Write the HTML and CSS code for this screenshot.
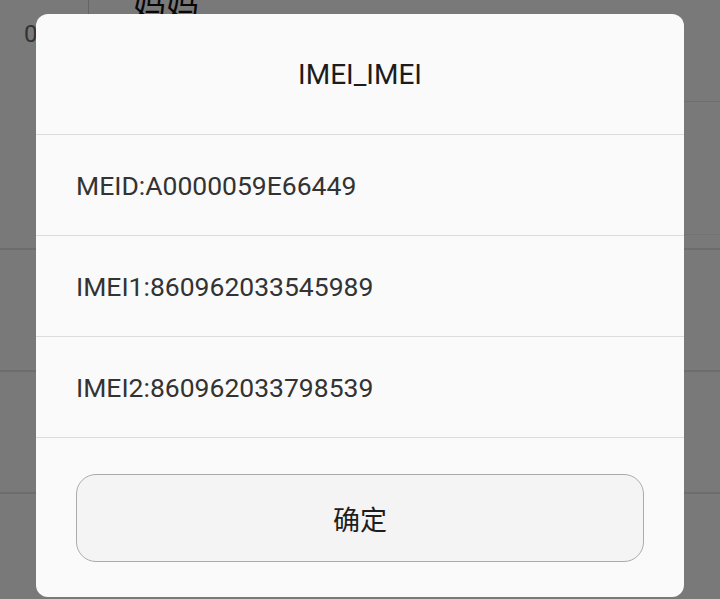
FILE: index.html
```html
<!DOCTYPE html>
<html lang="zh-CN">
<head>
    <meta charset="utf-8">
    <title>IMEI</title>
    <link rel="stylesheet" href="styles.css">
</head>
<body>
<div id="screen">
    <div class="bg-list">
        <div class="bg-row bg-head">
            <span class="bg-time">09</span>
            <span class="bg-name">妈妈</span>
        </div>
        <div class="bg-row bg-second"></div>
        <div class="bg-row bg-gap"></div>
        <div class="bg-row bg-full"></div>
        <div class="bg-row bg-full"></div>
        <div class="bg-row bg-last"></div>
    </div>

    <div id="mask"></div>

    <div id="dialog">
        <div class="dlg-title">IMEI_IMEI</div>
        <div class="dlg-row">MEID:A0000059E66449</div>
        <div class="dlg-row">IMEI1:860962033545989</div>
        <div class="dlg-row">IMEI2:860962033798539</div>
        <div class="dlg-foot">
            <button type="button" class="dlg-btn">确定</button>
        </div>
    </div>
</div>
</body>
</html>
```

FILE: styles.css
```css
body {
    margin:0;
    font-family:Roboto, "Noto Sans CJK SC", sans-serif;
}
#screen {
    position:relative;
    width:720px;
    height:599px;
    overflow:hidden;
    background-color:#f2f2f2;
}
.bg-list {
    display:flex;
    flex-direction:column;
}
.bg-row {
    box-sizing:border-box;
}
.bg-head {
    position:relative;
    height:102px;
    border-bottom:1px solid #dcdcdc;
    margin-left:88px;
}
.bg-head::before {
    content:"";
    position:absolute;
    left:0;
    top:0;
    height:14px;
    border-left:1px solid #c8c8c8;
}
.bg-time {
    position:absolute;
    left:-64px;
    top:20px;
    font-size:24px;
    color:#666;
}
.bg-name {
    position:absolute;
    left:45px;
    top:-21px;
    font-size:33px;
    color:#111;
}
.bg-second {
    height:133px;
    border-bottom:1px solid #e6e6e6;
    margin-left:88px;
}
.bg-gap {
    height:15px;
    border-bottom:2px solid #dadada;
}
.bg-full {
    height:122px;
    border-bottom:2px solid #dadada;
}
.bg-last {
    height:106px;
}
#mask {
    position:absolute;
    left:0;
    top:0;
    right:0;
    bottom:0;
    background-color:rgba(0,0,0,0.5);
}
#dialog {
    position:absolute;
    left:36px;
    top:14px;
    width:648px;
    height:583px;
    background-color:#fafafa;
    border-radius:12px;
    display:flex;
    flex-direction:column;
}
.dlg-title {
    height:120px;
    border-bottom:1px solid #dcdcdc;
    display:flex;
    align-items:center;
    justify-content:center;
    font-size:28px;
    color:#1c1c1c;
}
.dlg-row {
    height:100px;
    border-bottom:1px solid #dcdcdc;
    display:flex;
    align-items:center;
    padding-left:40px;
    font-size:26.5px;
    color:#333;
}
.dlg-foot {
    padding:36px 40px 0 40px;
}
.dlg-btn {
    display:block;
    width:568px;
    height:88px;
    border:1px solid #ababab;
    border-radius:20px;
    background-color:#f4f4f4;
    font-family:Roboto, "Noto Sans CJK SC", sans-serif;
    font-size:27px;
    color:#1e1e1e;
}
```
